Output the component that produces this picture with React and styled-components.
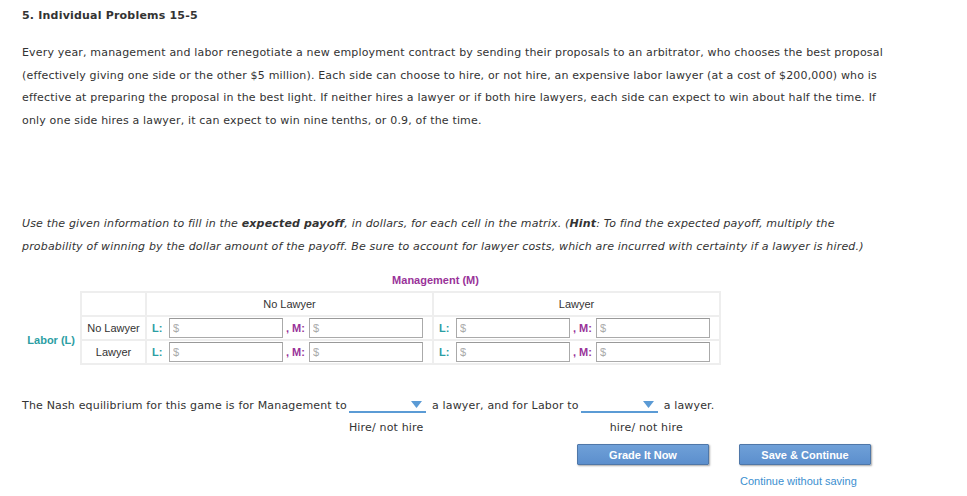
import styled, { createGlobalStyle } from "styled-components";

const GlobalStyle = createGlobalStyle`
    body {
        margin: 0;
        background: #fff;
        font-family: "DejaVu Sans", Verdana, sans-serif;
        font-size: 11px;
        color: #333;
    }
`;

const Page = styled.div`
    padding: 8px 22px 0;
    width: 923px;
`;

const Title = styled.h3`
    margin: 0;
    font-size: 11px;
    line-height: 16px;
    font-weight: bold;
    letter-spacing: 0.2px;
    color: #333;
`;

const Text = styled.p`
    margin: ${props => props.margin || "0"};
    width: 866px;
    line-height: 22.7px;
    letter-spacing: 0.17px;
    font-style: ${props => props.italic ? "italic" : "normal"};
`;

const MatrixWrap = styled.div`
    font-family: "Liberation Sans", Arial, sans-serif;
    font-size: 11px;
    color: #333;
`;

const Caption = styled.div`
    width: 823px;
    text-align: center;
    color: #993399;
    font-weight: bold;
    line-height: 14px;
    margin: 0 0 4px;
    padding-left: 2px;
`;

const MatrixRow = styled.div`
    display: flex;
    align-items: center;
`;

const SideLabel = styled.div`
    width: 53px;
    padding: 24px 5px 0 0;
    text-align: right;
    color: #2b9ea3;
    font-weight: bold;
`;

const Table = styled.table`
    border-collapse: collapse;
    td {
        border: 2px solid #eeeeee;
        height: 22px;
        padding: 0;
    }
`;

const RowHead = styled.td`
    width: 63px;
    text-align: center;
`;

const ColHead = styled.td`
    width: 285px;
    text-align: center;
`;

const Cell = styled.td`
    padding: 0 0 0 5px !important;
`;

const CellInner = styled.div`
    display: flex;
    align-items: center;
    gap: 3px;
`;

const Tag = styled.span`
    color: ${props => props.color};
    font-weight: bold;
    width: ${props => props.width};
`;

const Money = styled.input`
    width: 114px;
    height: 20px;
    box-sizing: border-box;
    border: 1px solid #aaa;
    border-top-color: #999;
    padding: 0 3px;
    font-family: "Liberation Sans", Arial, sans-serif;
    font-size: 11px;
    &::placeholder {
        color: #aaa;
    }
`;

const Nash = styled.div`
    margin-top: 33px;
    display: flex;
    align-items: flex-start;
    line-height: 16px;
    letter-spacing: 0.17px;
`;

const Pick = styled.div`
    display: inline-flex;
    flex-direction: column;
    width: 77px;
    margin: 0 6px 0 2px;
`;

const Drop = styled.div`
    width: 77px;
    height: 15px;
    border-bottom: 2px solid #5b9bd5;
    display: flex;
    justify-content: flex-end;
    align-items: center;
    padding-right: 4px;
    box-sizing: border-box;
    svg {
        display: block;
    }
`;

const Hint = styled.span`
    margin-top: 7px;
    font-size: 11px;
    white-space: nowrap;
    padding-left: ${props => props.shift || "0"};
`;

const Actions = styled.div`
    display: flex;
    gap: 30px;
    padding-left: 555px;
    margin-top: 8px;
`;

const Button = styled.button`
    width: 132px;
    height: 21px;
    border: 1px solid #4f77a8;
    border-radius: 1px;
    background: linear-gradient(#6fa0d8, #5c8fcd);
    box-shadow: 1px 1px 2px rgba(0, 0, 0, 0.35);
    color: #fff;
    font-family: "Liberation Sans", Arial, sans-serif;
    font-size: 11px;
    font-weight: bold;
    padding: 0;
`;

const Link = styled.a`
    display: block;
    margin: 10px 0 0 718px;
    font-family: "Liberation Sans", Arial, sans-serif;
    font-size: 11px;
    color: #3b8fd0;
    text-decoration: none;
`;

const Arrow = () => (
    <svg width="11" height="7" viewBox="0 0 11 7">
        <path d="M0 0 L11 0 L5.5 7 Z" fill="#5b9bd5" />
    </svg>
);

const L = "#2b9ea3";
const M = "#993399";

const PayoffCell = () => (
    <Cell>
        <CellInner>
            <Tag color={L} width="14px">L:</Tag>
            <Money placeholder="$" />
            <Tag color={M} width="20px">, M:</Tag>
            <Money placeholder="$" />
        </CellInner>
    </Cell>
);

const App = () => (
    <Page>
        <GlobalStyle />
        <Title>5. Individual Problems 15-5</Title>
        <Text margin="18px 0 0">
            Every year, management and labor renegotiate a new employment contract by sending their proposals to an arbitrator, who chooses the best proposal (effectively giving one side or the other $5 million). Each side can choose to hire, or not hire, an expensive labor lawyer (at a cost of $200,000) who is effective at preparing the proposal in the best light. If neither hires a lawyer or if both hire lawyers, each side can expect to win about half the time. If only one side hires a lawyer, it can expect to win nine tenths, or 0.9, of the time.
        </Text>
        <Text italic margin="80px 0 15px">
            Use the given information to fill in the <b>expected payoff</b>, in dollars, for each cell in the matrix. (<b>Hint</b>: To find the expected payoff, multiply the probability of winning by the dollar amount of the payoff. Be sure to account for lawyer costs, which are incurred with certainty if a lawyer is hired.)
        </Text>
        <MatrixWrap>
            <Caption>Management (M)</Caption>
            <MatrixRow>
                <SideLabel>Labor (L)</SideLabel>
                <Table>
                    <tbody>
                        <tr>
                            <RowHead />
                            <ColHead>No Lawyer</ColHead>
                            <ColHead>Lawyer</ColHead>
                        </tr>
                        <tr>
                            <RowHead>No Lawyer</RowHead>
                            <PayoffCell />
                            <PayoffCell />
                        </tr>
                        <tr>
                            <RowHead>Lawyer</RowHead>
                            <PayoffCell />
                            <PayoffCell />
                        </tr>
                    </tbody>
                </Table>
            </MatrixRow>
        </MatrixWrap>
        <Nash>
            <span>The Nash equilibrium for this game is for Management to</span>
            <Pick>
                <Drop><Arrow /></Drop>
                <Hint>Hire/ not hire</Hint>
            </Pick>
            <span>a lawyer, and for Labor to</span>
            <Pick>
                <Drop><Arrow /></Drop>
                <Hint shift="29px">hire/ not hire</Hint>
            </Pick>
            <span>a lawyer.</span>
        </Nash>
        <Actions>
            <Button>Grade It Now</Button>
            <Button>Save &amp; Continue</Button>
        </Actions>
        <Link href="#">Continue without saving</Link>
    </Page>
);

export default App;
